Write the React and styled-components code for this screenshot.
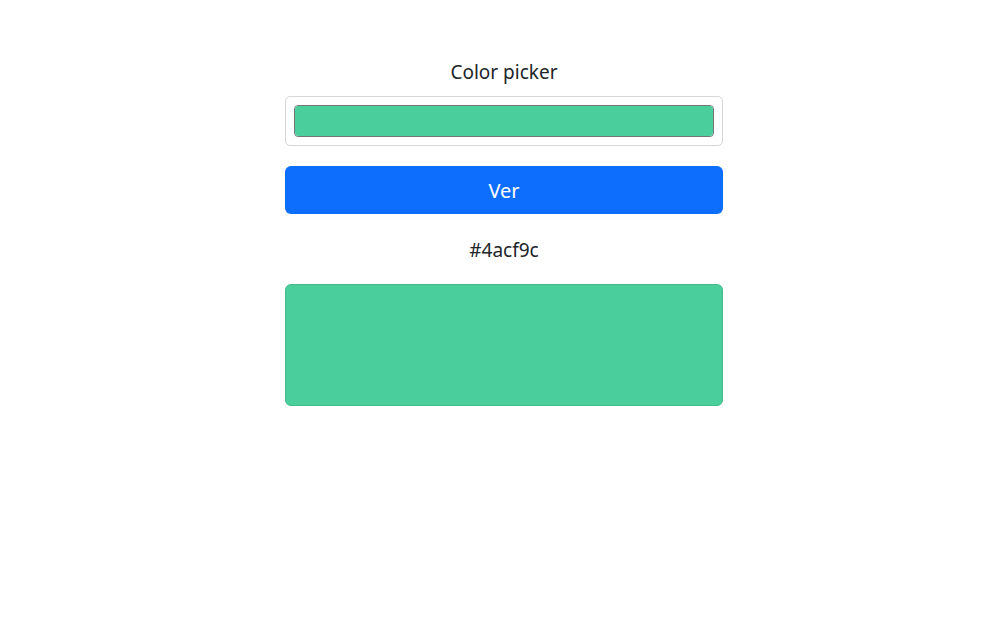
import React, { useState } from "react";
import styled, { createGlobalStyle } from "styled-components";

const GlobalStyle = createGlobalStyle`
  body {
    margin: 0;
    background: #fff;
    color: #212529;
    font-family: "Noto Sans", "Open Sans", sans-serif;
  }
`;

export default function App() {
  const [color, setColor] = useState("#4acf9c");
  const [shown, setShown] = useState("#4acf9c");

  return (
    <>
      <GlobalStyle />
      <Page>
        <Title>Color picker</Title>
        <PickerBox>
          <ColorInput
            type="color"
            value={color}
            onChange={(e) => setColor(e.target.value)}
          />
        </PickerBox>
        <ShowButton type="button" onClick={() => setShown(color)}>
          Ver
        </ShowButton>
        <HexText>{shown}</HexText>
        <Swatch style={{ backgroundColor: shown }} />
      </Page>
    </>
  );
}

const Page = styled.div`
  width: 438px;
  margin: 0 auto;
  padding-top: 57px;
  display: flex;
  flex-direction: column;
`;

const Title = styled.div`
  font-size: 19px;
  line-height: 30px;
  text-align: center;
  margin-bottom: 9px;
`;

const PickerBox = styled.div`
  box-sizing: border-box;
  height: 50px;
  padding: 8px;
  border: 1px solid #d4d6da;
  border-radius: 5px;
  display: flex;
`;

const ColorInput = styled.input`
  flex: 1;
  height: 32px;
  margin: 0;
  padding: 0;
  border: 1px solid #767676;
  border-radius: 4px;
  background: transparent;
  cursor: pointer;
  -webkit-appearance: none;
  appearance: none;

  &::-webkit-color-swatch-wrapper {
    padding: 0;
  }
  &::-webkit-color-swatch {
    border: none;
    border-radius: 3px;
  }
`;

const ShowButton = styled.button`
  margin-top: 20px;
  height: 48px;
  border: none;
  border-radius: 6px;
  background: #0d6efd;
  color: #fff;
  font-family: inherit;
  font-size: 20px;
  cursor: pointer;
`;

const HexText = styled.div`
  margin-top: 21px;
  font-size: 19px;
  line-height: 30px;
  text-align: center;
`;

const Swatch = styled.div`
  margin-top: 19px;
  height: 122px;
  border: 1px solid #43bb8d;
  border-radius: 6px;
  box-sizing: border-box;
`;
